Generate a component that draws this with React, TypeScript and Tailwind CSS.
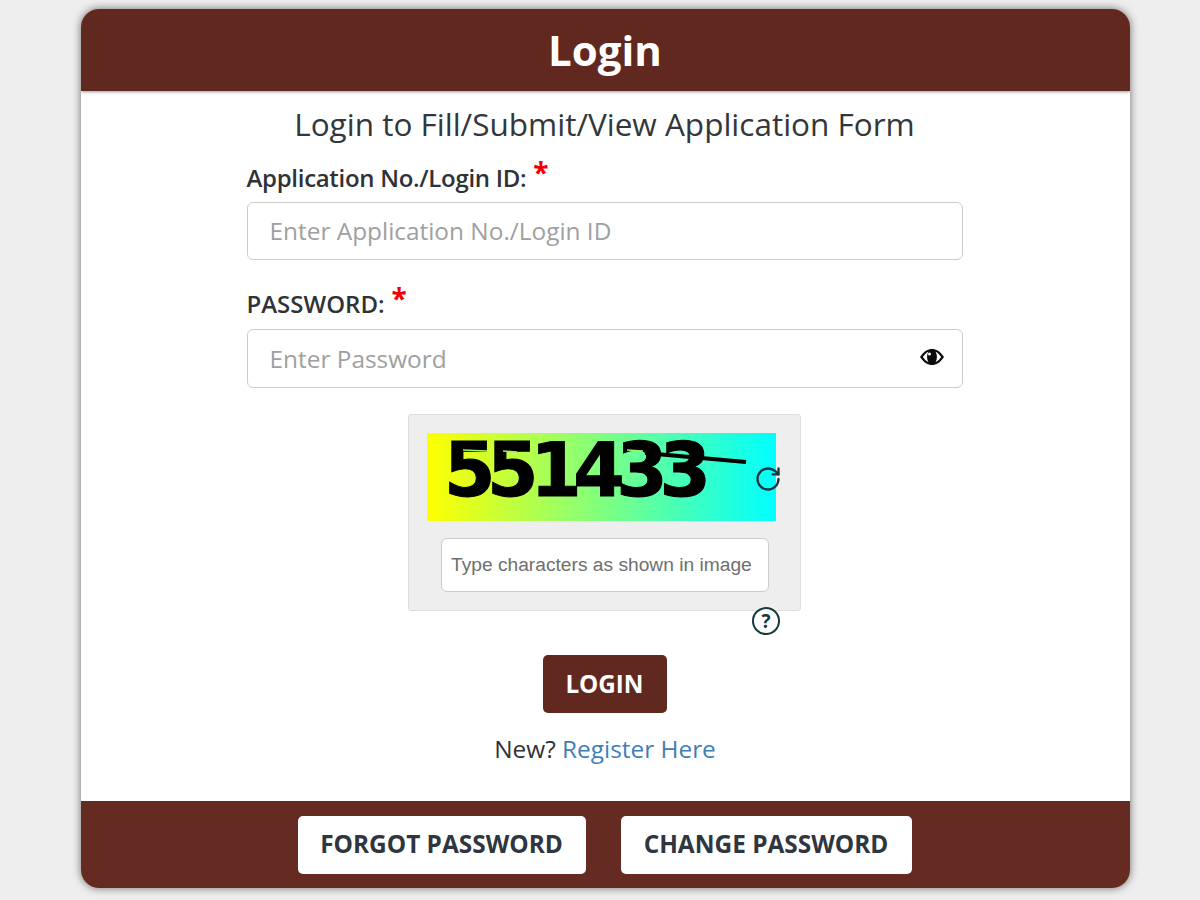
import { RotateCw } from "lucide-react";

function Star() {
  return <span className="text-[28px] font-bold leading-none text-[#f00000] relative top-[-6px] ml-[7px]">*</span>;
}

function EyeIcon() {
  return (
    <svg viewBox="0 0 26 18" className="absolute right-[17px] top-[18px] w-[26px] h-[18px]">
      <path d="M1 9 C5 3 9 1 13 1 C17 1 21 3 25 9 C21 15 17 17 13 17 C9 17 5 15 1 9 Z" fill="#0a0a0a" />
      <path d="M3.8 9 C6.5 5.6 8 4.4 9.4 3.8 C7.6 7 7.6 11 9.4 14.2 C8 13.6 6.5 12.4 3.8 9 Z M16.6 3.8 C18 4.4 19.5 5.6 22.2 9 C19.5 12.4 18 13.6 16.6 14.2 C18.4 11 18.4 7 16.6 3.8 Z" fill="#ffffff" />
      <circle cx="10.5" cy="6" r="1.5" fill="#ffffff" />
    </svg>
  );
}

export default function App() {
  return (
    <div className="min-h-[900px] bg-[#eeeeee] pt-[9px] font-['Open_Sans',sans-serif] text-[#2f3236]">
      <div className="ml-[81px] w-[1049px] h-[879px] bg-white rounded-[18px] overflow-hidden shadow-[0_0_8px_rgba(0,0,0,0.55)] flex flex-col">
        {/* Header */}
        <div className="h-[82px] shrink-0 bg-[#612820] flex items-center justify-center pr-[1px] shadow-[0_1px_3px_rgba(0,0,0,0.4)]">
          <h1 className="text-[42px] font-bold text-white leading-none">Login</h1>
        </div>

        {/* Form */}
        <div className="flex-1 flex flex-col items-center pr-[2px]">
          <h2 className="text-[31.5px] leading-[44px] mt-[11px] text-[#33373b]">Login to Fill/Submit/View Application Form</h2>

          <div className="w-[716px] mt-[13px]">
            <label className="flex items-center h-[38px] text-[24px] font-semibold tracking-[-0.3px]">
              Application No./Login ID:<Star />
            </label>
            <div className="h-[58px] border border-[#cccccc] rounded-[6px] flex items-center pl-[22px] pt-[1px] text-[24.4px] text-[#a0a0a0] mt-[5px]">
              Enter Application No./Login ID
            </div>

            <label className="flex items-center h-[38px] text-[24px] font-semibold tracking-[0px] mt-[25px]">
              PASSWORD:<Star />
            </label>
            <div className="relative h-[59px] border border-[#cccccc] rounded-[6px] flex items-center pl-[22px] pt-[1px] text-[24.4px] text-[#a0a0a0] mt-[6px]">
              Enter Password
              <EyeIcon />
            </div>
          </div>

          {/* Captcha */}
          <div className="relative w-[393px] h-[197px] mt-[26px] bg-[#eeeeee] border border-[#dddddd] rounded-[3px] pt-[18px]">
            <div className="relative ml-[18px] w-[349px] h-[88px] bg-linear-to-r/srgb from-[#ffff00] to-[#00ffff]">
              <span className="absolute left-[17px] top-0 font-['DejaVu_Sans',sans-serif] font-bold text-[74px] leading-[74px] tracking-[-8.4px] text-black [-webkit-text-stroke:1px_#000]">551433</span>
              <svg viewBox="0 0 349 88" className="absolute inset-0 w-full h-full">
                <path d="M36 17 L60 18 M76 18 L90 19 M200 17 L216 18" stroke="#9dee6a" strokeWidth="1.5" fill="none" />
                <path d="M218 20 L319 29" stroke="#000" strokeWidth="4" fill="none" />
              </svg>
            </div>
            <RotateCw className="absolute left-[345px] top-[50px] w-[28px] h-[28px] text-[#17393d]" strokeWidth={2} />
            <div className="ml-[32px] mt-[17px] w-[328px] h-[54px] bg-white border border-[#cccccc] rounded-[6px] flex items-center pl-[9px] pt-[1px] font-['Liberation_Sans',sans-serif] text-[19.2px] text-[#6f6f6f]">
              Type characters as shown in image
            </div>
            <div className="absolute left-[343px] top-[192px] w-[28px] h-[28px] rounded-full border-[2.5px] border-[#17393d] bg-white flex items-center justify-center text-[19px] font-bold text-[#17393d] leading-none">?</div>
          </div>

          <button className="mt-[44px] w-[124px] h-[58px] bg-[#612820] text-white text-[24.2px] font-bold rounded-[5px] pt-[1px]">LOGIN</button>

          <p className="mt-[18px] ml-[1px] text-[24.4px] leading-[36px]">
            New? <span className="text-[#3f7fb5]">Register Here</span>
          </p>
        </div>

        {/* Footer */}
        <div className="h-[87px] shrink-0 bg-[#652a22] flex items-center justify-center gap-[35px] pt-[1px] pr-[2px]">
          <button className="w-[288px] h-[58px] bg-white rounded-[5px] text-[24.4px] font-bold text-[#2f3640] pb-[1px]">FORGOT PASSWORD</button>
          <button className="w-[291px] h-[58px] bg-white rounded-[5px] text-[24.4px] font-bold text-[#2f3640] pb-[1px]">CHANGE PASSWORD</button>
        </div>
      </div>
    </div>
  );
}
